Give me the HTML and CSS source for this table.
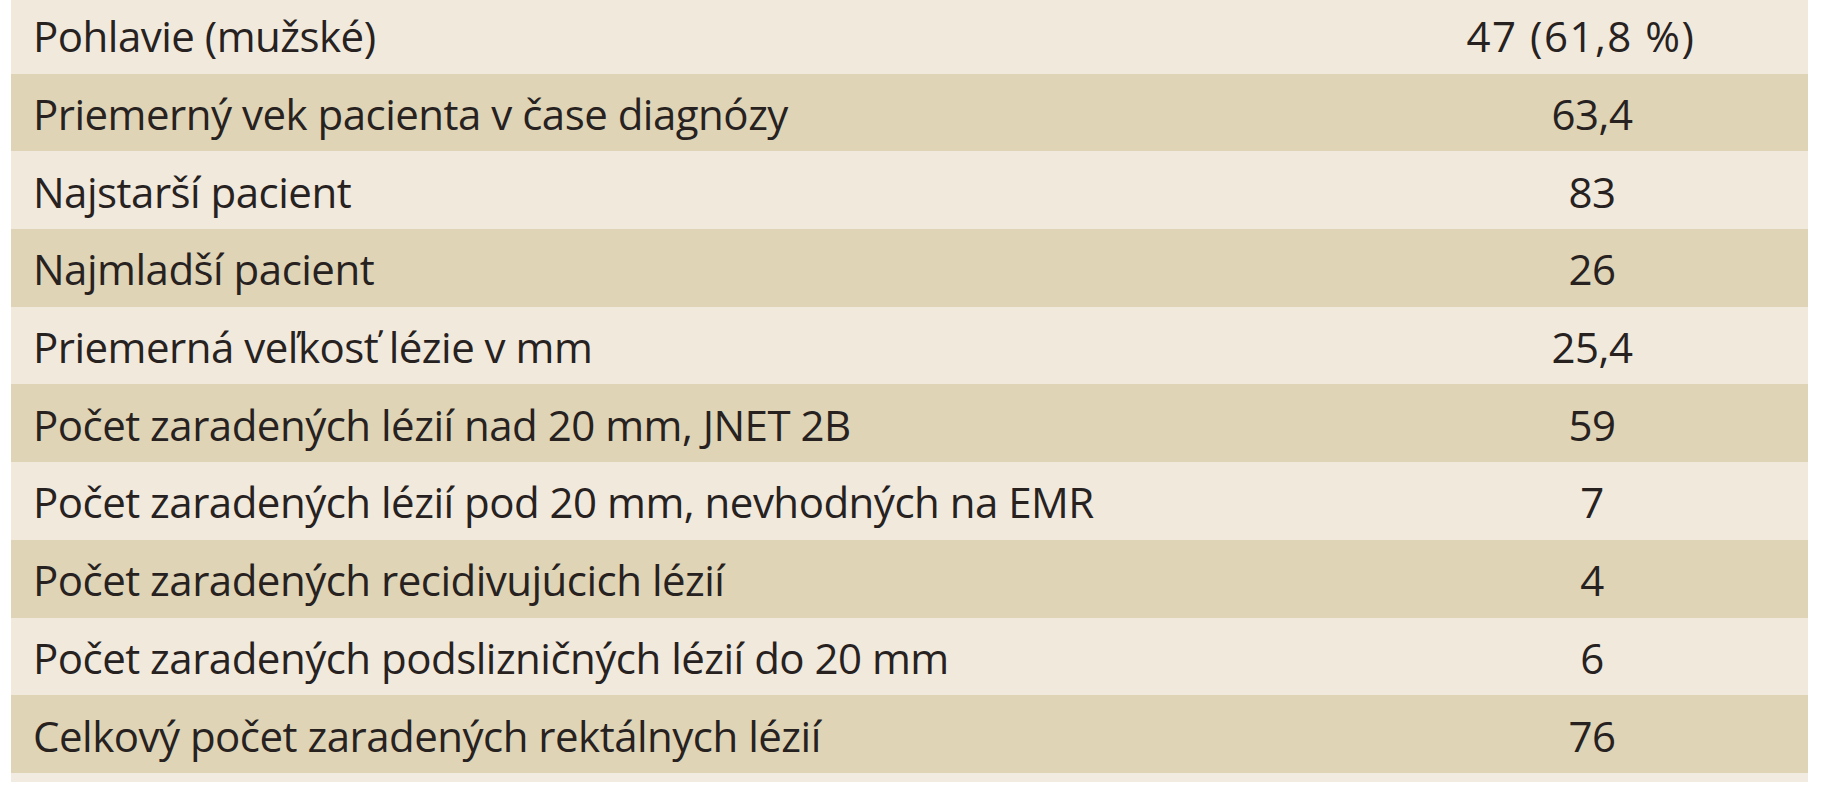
FILE: index.html
```html
<!DOCTYPE html>
<html lang="sk">
<head>
<meta charset="utf-8">
<title>Tabuľka</title>
<link rel="stylesheet" href="styles.css">
</head>
<body>
<div class="wrap">
<table class="data">
<tbody>
<tr class="light"><td class="label">Pohlavie (mužské)</td><td class="value first">47 (61,8 %)</td></tr>
<tr class="dark"><td class="label">Priemerný vek pacienta v čase diagnózy</td><td class="value">63,4</td></tr>
<tr class="light"><td class="label">Najstarší pacient</td><td class="value">83</td></tr>
<tr class="dark"><td class="label">Najmladší pacient</td><td class="value">26</td></tr>
<tr class="light"><td class="label">Priemerná veľkosť lézie v mm</td><td class="value">25,4</td></tr>
<tr class="dark"><td class="label">Počet zaradených lézií nad 20 mm, JNET 2B</td><td class="value">59</td></tr>
<tr class="light"><td class="label">Počet zaradených lézií pod 20 mm, nevhodných na EMR</td><td class="value">7</td></tr>
<tr class="dark"><td class="label">Počet zaradených recidivujúcich lézií</td><td class="value">4</td></tr>
<tr class="light"><td class="label">Počet zaradených podslizničných lézií do 20 mm</td><td class="value">6</td></tr>
<tr class="dark"><td class="label">Celkový počet zaradených rektálnych lézií</td><td class="value">76</td></tr>
</tbody>
</table>
</div>
</body>
</html>
```
FILE: styles.css
```css
html, body {
  margin: 0;
  padding: 0;
  background: #ffffff;
}
.wrap {
  margin-top: -4px;
  margin-left: 11px;
  width: 1797px;
  padding-bottom: 9px;
  background: #f1ebe2;
}
.data {
  width: 100%;
  border-collapse: collapse;
  border-spacing: 0;
  font-family: "Open Sans", "Noto Sans", sans-serif;
  font-size: 42px;
  letter-spacing: -0.5px;
  color: #27221f;
}
.data td {
  height: 77.7px;
  padding: 0;
  vertical-align: middle;
  line-height: 1;
}
.data .label {
  padding-left: 22px;
  padding-top: 3px;
  box-sizing: border-box;
}
.data .value {
  width: 432px;
  text-align: center;
  padding-top: 3px;
  box-sizing: border-box;
}
.data .first {
  letter-spacing: 1.5px;
  padding-right: 22px;
}
.light {
  background: #f0e9dc;
}
.dark {
  background: #dfd4b6;
}
```
